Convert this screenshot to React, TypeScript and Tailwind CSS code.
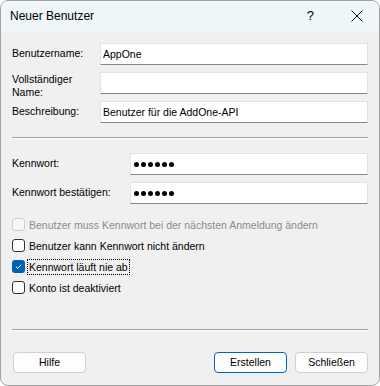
const font = { fontFamily: '"Liberation Sans", Arial, sans-serif' };

function Field({ value, password }: { value?: string; password?: boolean }) {
  return (
    <div className="flex h-[22px] flex-1 items-center border border-[#e3e3e3] border-b-[#878787] bg-white pl-[2px]">
      {password ? (
        <div className="ml-[1px] flex gap-[2px]">
          {[0, 1, 2, 3, 4, 5].map((i) => (
            <span key={i} className="h-[5px] w-[5px] rounded-full bg-black" />
          ))}
        </div>
      ) : (
        <span className="leading-none">{value}</span>
      )}
    </div>
  );
}

function Check({
  label,
  checked,
  disabled,
  focused,
}: {
  label: string;
  checked?: boolean;
  disabled?: boolean;
  focused?: boolean;
}) {
  return (
    <div className="flex h-[21px] items-center">
      {checked ? (
        <span className="flex h-[13px] w-[13px] items-center justify-center rounded-[3px] bg-[#005fb8]">
          <svg width="9" height="9" viewBox="0 0 9 9" fill="none">
            <path d="M2 4.8 L3.8 6.4 L7 2.8" stroke="white" strokeWidth="1" />
          </svg>
        </span>
      ) : (
        <span
          className={`h-[13px] w-[13px] rounded-[3px] border ${
            disabled ? "border-[#cfcfcf] bg-[#f7f7f7]" : "border-[#333] bg-white"
          }`}
        />
      )}
      <span
        className={`ml-[3px] px-[1px] leading-[14px] ${
          disabled ? "text-[#8b8b8b]" : "text-black"
        } ${focused ? "outline-1 outline-dotted outline-black" : ""}`}
      >
        {label}
      </span>
    </div>
  );
}

function Button({ label, primary }: { label: string; primary?: boolean }) {
  return (
    <button
      className={`h-[21px] w-[73px] rounded-[4px] border bg-[#fdfdfd] text-black ${
        primary ? "border-[#0067c0]" : "border-[#d0d0d0]"
      }`}
    >
      {label}
    </button>
  );
}

export default function App() {
  return (
    <div
      className="flex h-[386px] w-[380px] flex-col overflow-hidden rounded-[8px] border border-[#a3a3a3] bg-[#f0f0f0] text-[10.5px] text-black"
      style={font}
    >
      <div className="flex h-[30px] items-center bg-[#eef6f9] pl-[9px]">
        <span className="text-[12px]">Neuer Benutzer</span>
        <span className="ml-auto mr-[37px] text-[13px]">?</span>
        <svg className="mr-[16px]" width="12" height="12" viewBox="0 0 12 12" fill="none">
          <path d="M0.5 0.5 L11.5 11.5 M11.5 0.5 L0.5 11.5" stroke="#111" strokeWidth="1" />
        </svg>
      </div>

      <div className="flex flex-col px-[11px] pt-[12px]">
        <div className="flex items-center">
          <span className="w-[88px]">Benutzername:</span>
          <Field value="AppOne" />
        </div>
        <div className="mt-[7px] flex h-[22px] items-start">
          <span className="mt-[1px] w-[88px] leading-[13px]">
            Vollständiger
            <br />
            Name:
          </span>
          <Field />
        </div>
        <div className="mt-[7px] flex items-center">
          <span className="w-[88px]">Beschreibung:</span>
          <Field value="Benutzer für die AddOne-API" />
        </div>

        <div className="mt-[14px] border-t border-b border-t-[#a0a0a0] border-b-white" />

        <div className="mt-[14px] flex items-center">
          <span className="w-[118px]">Kennwort:</span>
          <Field password />
        </div>
        <div className="mt-[7px] flex items-center">
          <span className="w-[118px]">Kennwort bestätigen:</span>
          <Field password />
        </div>

        <div className="mt-[10px] flex flex-col">
          <Check label="Benutzer muss Kennwort bei der nächsten Anmeldung ändern" disabled />
          <Check label="Benutzer kann Kennwort nicht ändern" />
          <Check label="Kennwort läuft nie ab" checked focused />
          <Check label="Konto ist deaktiviert" />
        </div>

        <div className="mt-[31px] border-t border-b border-t-[#a0a0a0] border-b-white" />

        <div className="mt-[21px] flex items-center">
          <div className="ml-[1px]">
            <Button label="Hilfe" />
          </div>
          <div className="ml-auto flex gap-[8px]">
            <Button label="Erstellen" primary />
            <Button label="Schließen" />
          </div>
        </div>
      </div>
    </div>
  );
}
